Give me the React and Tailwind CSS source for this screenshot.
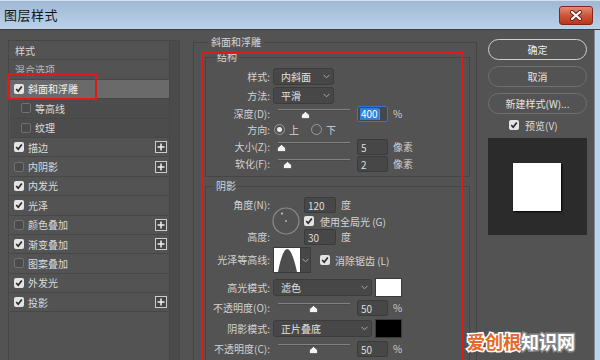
import React from "react";

const layers = [
  { t: "样式", head: true },
  { t: "混合选项", head: true, dim: true },
  { t: "斜面和浮雕", on: true, sel: true },
  { t: "等高线", sub: true },
  { t: "纹理", sub: true },
  { t: "描边", on: true, plus: true },
  { t: "内阴影", plus: true },
  { t: "内发光", on: true },
  { t: "光泽", on: true },
  { t: "颜色叠加", plus: true },
  { t: "渐变叠加", on: true, plus: true },
  { t: "图案叠加" },
  { t: "外发光", on: true },
  { t: "投影", on: true, plus: true },
];

function Check({ on }) {
  if (!on) {
    return <span className="w-[10px] h-[10px] rounded-[2px] border border-[#707070] bg-[#4a4a4a] shrink-0" />;
  }
  return (
    <span className="w-[10px] h-[10px] rounded-[2px] bg-[#e4e4e4] flex items-center justify-center shrink-0">
      <svg width="8" height="8" viewBox="0 0 8 8">
        <path d="M1.2 4 L3.2 6.2 L6.8 1.5" fill="none" stroke="#2a2a2a" strokeWidth="1.7" />
      </svg>
    </span>
  );
}

function Plus() {
  return (
    <span className="ml-auto mr-[2px] w-[12px] h-[12px] border border-[#cdcdcd] bg-[#474747] flex items-center justify-center">
      <svg width="8" height="8" viewBox="0 0 8 8">
        <path d="M4 0.5 V7.5 M0.5 4 H7.5" stroke="#f0f0f0" strokeWidth="1.5" />
      </svg>
    </span>
  );
}

function Chevron() {
  return (
    <svg width="7" height="5" viewBox="0 0 7 5" className="shrink-0">
      <path d="M0.5 0.8 L3.5 3.8 L6.5 0.8" fill="none" stroke="#a8a8a8" strokeWidth="1" />
    </svg>
  );
}

function Label({ children }) {
  return <span className="w-[64px] shrink-0 text-right text-[10px] text-[#d2d2d2] leading-none">{children}</span>;
}

function Select({ value, width }) {
  return (
    <div className={"ml-[3px] h-[17px] rounded-[3px] bg-[#474747] border border-[#3c3c3c] flex items-center pl-[7px] pr-[3px] text-[10px] text-[#e2e2e2] " + width}>
      <span className="flex-1">{value}</span>
      <Chevron />
    </div>
  );
}

function Slider({ pos }) {
  return (
    <div className="ml-[8px] w-[72px] h-full relative shrink-0">
      <div className="absolute left-0 right-0 top-[3px] h-[2px] bg-[#838383] border-b border-[#4a4a4a]" />
      <svg width="9" height="8" viewBox="0 0 9 8" className="absolute top-[5px]" style={{ left: pos }}>
        <path d="M4.5 0.5 L8.5 4 V7.5 H0.5 V4 Z" fill="#f4f4f4" stroke="#3a3a3a" strokeWidth="0.6" />
      </svg>
    </div>
  );
}

function Field({ value, ml = "ml-[7px]", w = "w-[31px]" }) {
  return (
    <div className={ml + " " + w + " h-[16px] rounded-[2px] bg-[#474747] border border-[#3b3b3b] flex items-center pl-[3px] text-[10px] text-[#dedede] shrink-0"}>
      {value}
    </div>
  );
}

function Unit({ children }) {
  return <span className="ml-[5px] text-[10px] text-[#cfcfcf] leading-none">{children}</span>;
}

function Radio({ on }) {
  return (
    <span className="w-[11px] h-[11px] rounded-full border border-[#9a9a9a] flex items-center justify-center shrink-0">
      {on && <span className="w-[5px] h-[5px] rounded-full bg-[#ededed]" />}
    </span>
  );
}

export default function App() {
  return (
    <div className="relative w-[600px] h-[360px] overflow-hidden bg-[#535353] font-['Noto_Sans_CJK_SC','Noto_Sans',sans-serif]">
      {/* title bar */}
      <div className="h-[30px] flex items-center border-t border-[#d3e0ee] border-b border-b-[#3f3f3f] bg-gradient-to-b from-[#9fb8d3] to-[#bad1e9]">
        <span className="ml-[4px] text-[13px] text-[#151515] tracking-[0.5px]">图层样式</span>
        <div className="ml-auto mr-[7px] w-[34px] h-[19px] rounded-[3px] border border-[#7d2a1c] bg-gradient-to-b from-[#e38b74] via-[#cf5538] to-[#b8361c] flex items-center justify-center">
          <svg width="14" height="11" viewBox="0 0 14 11">
            <path d="M3 2 L11 9 M11 2 L3 9" stroke="#5a2016" strokeWidth="4" strokeLinecap="round" />
            <path d="M3 2 L11 9 M11 2 L3 9" stroke="#ffffff" strokeWidth="2.2" strokeLinecap="round" />
          </svg>
        </div>
      </div>

      <div className="flex h-[330px]">
        {/* left list */}
        <div className="ml-[8px] mt-[10px] w-[172px] h-[330px] border border-[#474747] flex">
          <div className="w-[159px] ml-[1px] flex flex-col">
            {layers.map((l) => (
              <div
                key={l.t}
                className={
                  "h-[19.4px] shrink-0 flex items-center border-b border-[#474747] text-[10px] " +
                  (l.sel ? "bg-[#6a6a6a] text-[#f2f2f2] " : l.sub ? "bg-[#4c4c4c] text-[#dcdcdc] " : "text-[#dcdcdc] ") +
                  (l.head ? "pl-[5px] " : l.sub ? "pl-[11px] " : "pl-[4px] ")
                }
              >
                {l.head ? (
                  <span className={l.dim ? "text-[#bababa]" : "text-[#d6d6d6]"}>{l.t}</span>
                ) : (
                  <>
                    <Check on={l.on} />
                    <span className="ml-[4px]">{l.t}</span>
                    {l.plus && <Plus />}
                  </>
                )}
              </div>
            ))}
          </div>
          <div className="flex-1 bg-[#4b4b4b] border-l border-[#474747]" />
        </div>

        {/* middle settings */}
        <div className="ml-[13px] mt-[12px] w-[284px] h-[330px] border border-[#454545] relative shrink-0">
          <span className="absolute left-[14px] -top-[8px] px-[3px] bg-[#535353] text-[10px] text-[#d6d6d6] leading-[14px]">斜面和浮雕</span>

          {/* structure */}
          <div className="ml-[11px] mt-[14px] w-[265px] h-[120px] border border-[#454545] relative pt-[10px]">
            <span className="absolute left-[9px] -top-[8px] px-[2px] bg-[#535353] text-[10px] text-[#d6d6d6] leading-[14px]">结构</span>
            <div className="h-[17px] flex items-center">
              <Label>样式:</Label>
              <Select value="内斜面" width="w-[61px]" />
            </div>
            <div className="mt-[2px] h-[17px] flex items-center">
              <Label>方法:</Label>
              <Select value="平滑" width="w-[61px]" />
            </div>
            <div className="mt-[2px] h-[16px] flex items-center">
              <Label>深度(D):</Label>
              <Slider pos={23} />
              <div className="ml-[7px] w-[31px] h-[16px] rounded-[2px] bg-[#474747] border border-[#3a74c4] flex items-center pl-[2px] text-[10px] shrink-0">
                <span className="bg-[#2f7fdc] text-white px-[1px] leading-[12px]">400</span>
                <span className="w-[1px] h-[11px] bg-[#c9732c]" />
              </div>
              <Unit>%</Unit>
            </div>
            <div className="h-[15px] flex items-center">
              <Label>方向:</Label>
              <span className="ml-[4px]"><Radio on /></span>
              <span className="ml-[4px] text-[10px] text-[#d6d6d6]">上</span>
              <span className="ml-[12px]"><Radio /></span>
              <span className="ml-[4px] text-[10px] text-[#d6d6d6]">下</span>
            </div>
            <div className="mt-[2px] h-[16px] flex items-center">
              <Label>大小(Z):</Label>
              <Slider pos={-1} />
              <Field value="5" />
              <Unit>像素</Unit>
            </div>
            <div className="mt-[1px] h-[16px] flex items-center">
              <Label>软化(F):</Label>
              <Slider pos={5} />
              <Field value="2" />
              <Unit>像素</Unit>
            </div>
          </div>

          {/* shadow */}
          <div className="ml-[11px] mt-[9px] w-[265px] h-[200px] border border-[#454545] relative pt-[10px]">
            <span className="absolute left-[8px] -top-[8px] px-[2px] bg-[#535353] text-[10px] text-[#d6d6d6] leading-[14px]">阴影</span>
            <div className="h-[48px] flex">
              <div className="w-[64px] flex flex-col">
                <div className="h-[16px] flex items-center justify-end"><Label>角度(N):</Label></div>
                <div className="h-[16px]" />
                <div className="h-[16px] flex items-center justify-end"><Label>高度:</Label></div>
              </div>
              <div className="ml-[2px] w-[28px] flex items-center">
                <svg width="28" height="28" viewBox="0 0 28 28">
                  <circle cx="14" cy="14" r="13" fill="none" stroke="#8c8c8c" strokeWidth="1.2" />
                  <circle cx="14" cy="14" r="0.9" fill="#bdbdbd" />
                  <circle cx="10" cy="6.6" r="1.1" fill="#bdbdbd" />
                </svg>
              </div>
              <div className="ml-[4px] flex flex-col">
                <div className="h-[16px] flex items-center">
                  <Field value="120" ml="ml-0" w="w-[32px]" />
                  <Unit>度</Unit>
                </div>
                <div className="h-[16px] flex items-center">
                  <Check on />
                  <span className="ml-[6px] text-[10px] text-[#d6d6d6]">使用全局光 (G)</span>
                </div>
                <div className="h-[16px] flex items-center">
                  <Field value="30" ml="ml-0" w="w-[32px]" />
                  <Unit>度</Unit>
                </div>
              </div>
            </div>
            <div className="mt-[2px] h-[26px] flex items-center">
              <Label>光泽等高线:</Label>
              <div className="ml-[3px] h-[26px] flex border border-[#3b3b3b]">
                <svg width="26" height="24" viewBox="0 0 26 24" className="bg-white">
                  <path d="M4 24 Q13 -22 23 24 Z" fill="#4d4d4d" />
                </svg>
                <div className="w-[10px] bg-[#474747] border-l border-[#3b3b3b] flex items-center justify-center">
                  <Chevron />
                </div>
              </div>
              <span className="ml-[9px]"><Check on /></span>
              <span className="ml-[5px] text-[10px] text-[#d6d6d6]">消除锯齿 (L)</span>
            </div>
            <div className="mt-[5px] h-[19px] flex items-center">
              <Label>高光模式:</Label>
              <Select value="滤色" width="w-[99px]" />
              <div className="ml-[3px] w-[27px] h-[19px] bg-white border border-[#3a3a3a]" />
            </div>
            <div className="mt-[3px] h-[16px] flex items-center">
              <Label>不透明度(O):</Label>
              <Slider pos={31} />
              <Field value="50" />
              <Unit>%</Unit>
            </div>
            <div className="mt-[3px] h-[19px] flex items-center">
              <Label>阴影模式:</Label>
              <Select value="正片叠底" width="w-[99px]" />
              <div className="ml-[3px] w-[27px] h-[19px] bg-black border border-[#3a3a3a]" />
            </div>
            <div className="mt-[3px] h-[16px] flex items-center">
              <Label>不透明度(C):</Label>
              <Slider pos={31} />
              <Field value="50" />
              <Unit>%</Unit>
            </div>
          </div>
        </div>

        {/* right buttons */}
        <div className="ml-[11px] w-[99px] flex flex-col shrink-0">
          <button className="mt-[9px] h-[21px] rounded-full border border-[#cfcfcf] text-[10px] text-[#ececec]">确定</button>
          <button className="mt-[6px] h-[21px] rounded-full border border-[#707070] text-[10px] text-[#e4e4e4]">取消</button>
          <button className="mt-[6px] h-[21px] rounded-full border border-[#707070] text-[10px] text-[#e4e4e4]">新建样式(W)...</button>
          <div className="mt-[4px] h-[14px] flex items-center pl-[21px]">
            <Check on />
            <span className="ml-[6px] text-[10px] text-[#dcdcdc]">预览(V)</span>
          </div>
          <div className="mt-[6px] h-[97px] bg-[#2b2b2b] pl-[25px] pt-[25px]">
            <div className="w-[48px] h-[48px] bg-white shadow-[1px_1px_2px_rgba(0,0,0,0.9)]" />
          </div>
        </div>

        <div className="flex-1" />
        <div className="w-[6px] bg-[#bcd3ea] border-l border-[#7d8d9c]" />
      </div>

      {/* annotation boxes */}
      <div className="absolute left-[7px] top-[73px] w-[90px] h-[27px] border-2 border-[#e0191b]" />
      <div className="absolute left-[201px] top-[52px] w-[262px] h-[330px] border-2 border-[#e0191b]" />

      {/* watermark */}
      <div className="absolute left-[467px] top-[330px] text-[18px] font-bold leading-[22px] [paint-order:stroke_fill] [-webkit-text-stroke:3px_#ffffff]">
        <span className="text-[#e4682c]">爱创根</span>
        <span className="text-[#ffffff] [-webkit-text-stroke:3px_#8a8a8a]">知识网</span>
      </div>
    </div>
  );
}
